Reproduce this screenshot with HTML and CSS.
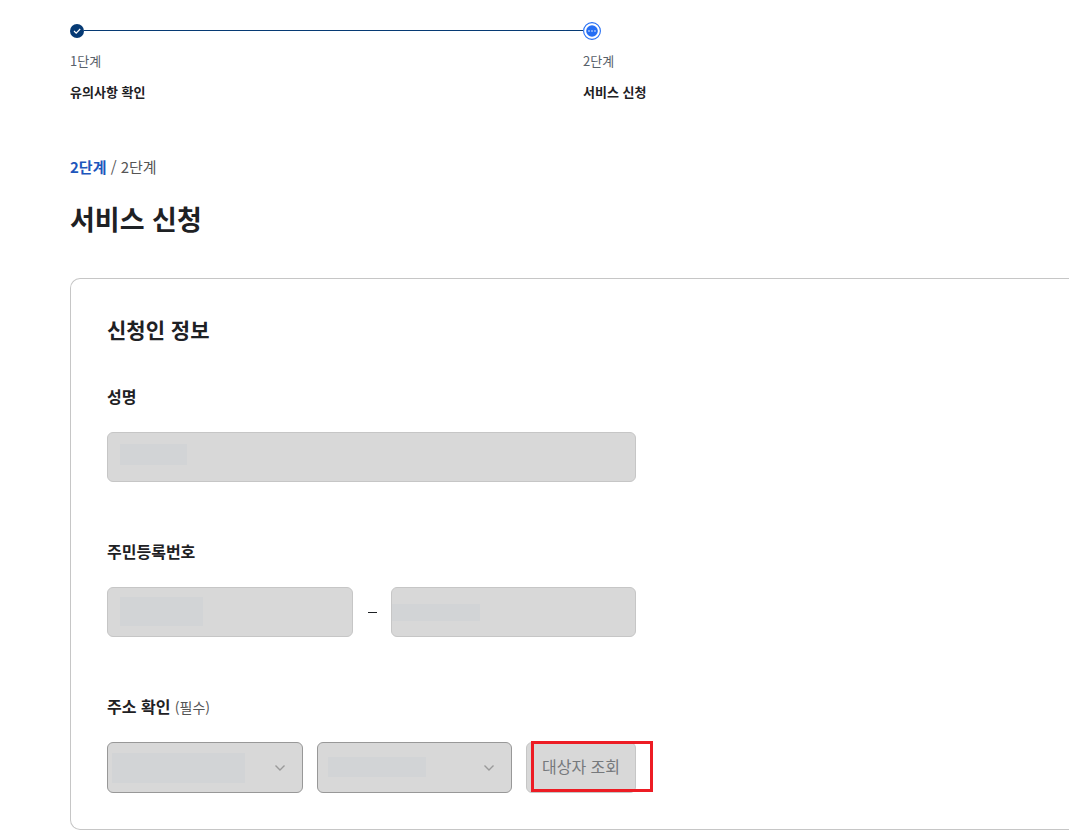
FILE: index.html
```
<!DOCTYPE html>
<html lang="ko">
<head>
    <meta charset="UTF-8">
    <meta name="viewport" content="width=device-width, initial-scale=1.0">
    <title>서비스 신청</title>
    <link rel="stylesheet" href="styles.css">
</head>
<body>

    <main class="page">
        <ol class="steps">
            <li class="step done">
                <div class="step-mark">
                    <svg width="14" height="18" viewBox="0 0 14 18">
                        <circle cx="7" cy="9" r="7" fill="#063a74"/>
                        <path d="M4 9l2.2 2.2L10.2 7" fill="none" stroke="#fff" stroke-width="1.2"/>
                    </svg>
                </div>
                <span class="step-no">1단계</span>
                <strong class="step-name">유의사항 확인</strong>
            </li>
            <li class="step">
                <div class="step-mark">
                    <svg width="18" height="18" viewBox="0 0 18 18">
                        <circle cx="9" cy="9" r="8.4" fill="#fff" stroke="#256ef4" stroke-width="1.1"/>
                        <circle cx="9" cy="9" r="5.8" fill="#256ef4"/>
                        <circle cx="6" cy="9" r="0.9" fill="#a8c5fa"/>
                        <circle cx="9" cy="9" r="0.9" fill="#a8c5fa"/>
                        <circle cx="12" cy="9" r="0.9" fill="#a8c5fa"/>
                    </svg>
                </div>
                <span class="step-no">2단계</span>
                <strong class="step-name">서비스 신청</strong>
            </li>
        </ol>

        <p class="progress"><strong>2단계</strong> / 2단계</p>
        <h1>서비스 신청</h1>

        <form class="card">
            <h2>신청인 정보</h2>

            <div class="group">
                <label class="label" for="name">성명</label>
                <div class="row">
                    <div class="field">
                        <input type="text" id="name" disabled>
                        <span class="mask mask-name"></span>
                    </div>
                </div>
            </div>

            <div class="group">
                <label class="label" for="rrn-front" id="rrn-label">주민등록번호</label>
                <div class="row">
                    <div class="field">
                        <input type="text" id="rrn-front" disabled>
                        <span class="mask mask-front"></span>
                    </div>
                    <span class="dash"></span>
                    <div class="field">
                        <input type="text" id="rrn-back" aria-labelledby="rrn-label" disabled>
                        <span class="mask mask-back"></span>
                    </div>
                </div>
            </div>

            <div class="group">
                <label class="label" for="sido" id="address-label">주소 확인 <span class="required">(필수)</span></label>
                <div class="row address">
                    <div class="field">
                        <select id="sido" disabled><option></option></select>
                        <svg class="arrow" width="12" height="8" viewBox="0 0 12 8"><path d="M1.5 1.5L6 6l4.5-4.5" fill="none" stroke="#9a9a9a" stroke-width="1.4"/></svg>
                        <span class="mask mask-sido"></span>
                    </div>
                    <div class="field">
                        <select id="sigungu" aria-labelledby="address-label" disabled><option></option></select>
                        <svg class="arrow" width="12" height="8" viewBox="0 0 12 8"><path d="M1.5 1.5L6 6l4.5-4.5" fill="none" stroke="#9a9a9a" stroke-width="1.4"/></svg>
                        <span class="mask mask-sigungu"></span>
                    </div>
                    <div class="search">
                        <button type="button" disabled>대상자 조회</button>
                        <span class="highlight"></span>
                    </div>
                </div>
            </div>
        </form>
    </main>

</body>
</html>
```

FILE: styles.css
```
* {
    box-sizing: border-box;
}

body {
    margin: 0;
    background: #fff;
    color: #1e2124;
    font-family: "Noto Sans CJK KR", sans-serif;
    font-size: 16px;
    line-height: 24px;
}

.page {
    padding: 22px 0 6px 70px;
}

/* steps */
.steps {
    display: flex;
    margin: 0;
    padding: 0;
    list-style: none;
}

.step {
    display: flex;
    flex-direction: column;
    flex: 1;
    font-size: 13px;
    line-height: 20px;
}

.step.done {
    flex: 0 0 513px;
}

.step-mark {
    display: flex;
    align-items: center;
    height: 18px;
    margin-bottom: 11px;
}

.step.done .step-mark::after {
    content: "";
    flex: 1;
    height: 1px;
    margin-bottom: 1px;
    background: #063a74;
}

.step-no {
    margin-bottom: 11px;
    color: #58616a;
}

.step-name {
    color: #1e2124;
}

/* title */
.progress {
    margin: 53px 0 0;
    font-size: 15px;
    color: #555;
}

.progress strong {
    color: #1d56bc;
}

h1 {
    margin: 20px 0 39px;
    font-size: 27px;
    line-height: 40px;
}

/* form */
.card {
    padding: 34px 0 36px 36px;
    border: 1px solid #c6c6c6;
    border-right: none;
    border-radius: 10px 0 0 10px;
}

h2 {
    margin: 0 0 39px;
    font-size: 21px;
    line-height: 32px;
}

.group {
    max-width: 529px;
    margin-bottom: 57px;
}

.group:last-child {
    margin-bottom: 0;
}

.label {
    display: block;
    margin-bottom: 24px;
    font-weight: bold;
}

.required {
    font-size: 14px;
    font-weight: normal;
    line-height: 20px;
    color: #555;
}

.row {
    display: flex;
    align-items: center;
}

.address {
    gap: 14px;
}

.field {
    position: relative;
    flex: 1;
}

input,
select,
button {
    display: block;
    width: 100%;
    height: 50px;
    margin: 0;
    padding: 0 12px;
    border: 1px solid #c6c6c6;
    border-radius: 6px;
    background: #d8d8d8;
    font-family: inherit;
    font-size: 16px;
    opacity: 1;
    appearance: none;
}

select,
button {
    height: 51px;
}

select {
    border-color: #989898;
}

button {
    padding-bottom: 3px;
    color: #76797c;
}

.dash {
    width: 9px;
    height: 1px;
    margin: 0 14px 0 15px;
    background: #1e2124;
}

.arrow {
    position: absolute;
    right: 17px;
    top: 22px;
}

.search {
    position: relative;
    width: 110px;
}

/* hidden personal data */
.mask {
    position: absolute;
    background: #d2d4d6;
}

.mask-name {
    left: 13px;
    top: 12px;
    width: 67px;
    height: 21px;
}

.mask-front {
    left: 13px;
    top: 10px;
    width: 83px;
    height: 29px;
}

.mask-back {
    left: 1px;
    top: 17px;
    width: 88px;
    height: 17px;
}

.mask-sido {
    left: 5px;
    top: 11px;
    width: 133px;
    height: 30px;
}

.mask-sigungu {
    left: 11px;
    top: 15px;
    width: 98px;
    height: 20px;
}

.highlight {
    position: absolute;
    left: 5px;
    top: -1px;
    width: 122px;
    height: 51px;
    border: 3px solid #ed1c24;
}
```
